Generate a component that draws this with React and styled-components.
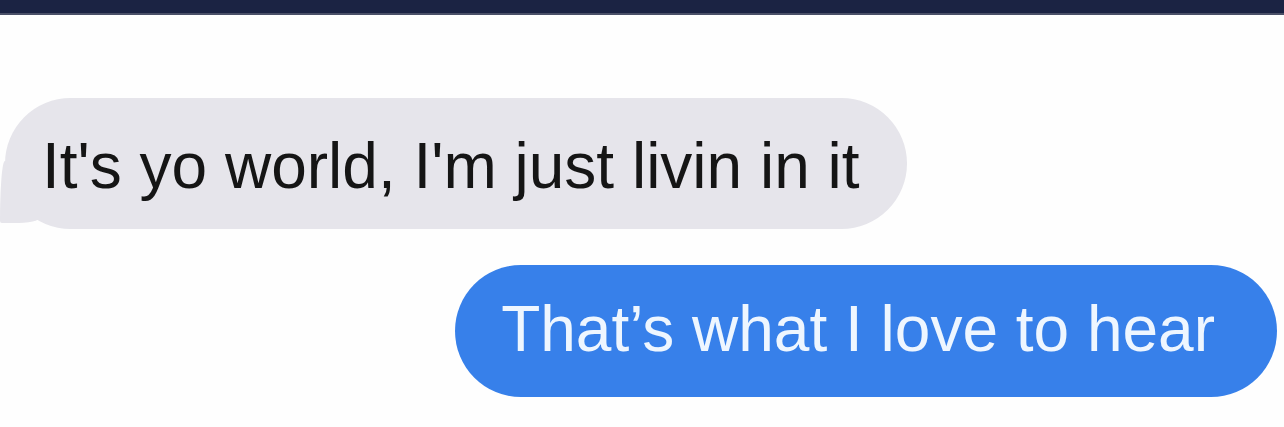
import React from "react";
import styled, { createGlobalStyle } from "styled-components";

const GlobalStyle = createGlobalStyle`
  html, body {
    margin: 0;
    padding: 0;
    background: #ffffff;
  }
  body {
    font-family: "Liberation Sans", Arial, "Noto Sans", sans-serif;
    -webkit-font-smoothing: antialiased;
  }
`;

const Screen = styled.div`
  width: 1284px;
  height: 427px;
  overflow: hidden;
  background: #fefefe;
  display: flex;
  flex-direction: column;
`;

const TopBar = styled.div`
  height: 13px;
  background: #1b2343;
  border-bottom: 2px solid #4a5068;
  flex-shrink: 0;
`;

const Thread = styled.div`
  display: flex;
  flex-direction: column;
  padding: 83px 7px 0 5px;
`;

const Bubble = styled.div`
  position: relative;
  box-sizing: border-box;
  display: flex;
  align-items: center;
  height: ${(p) => (p.$outgoing ? "132px" : "131px")};
  border-radius: 66px;
  font-size: 64px;
  line-height: 1;
  white-space: nowrap;
  align-self: ${(p) => (p.$outgoing ? "flex-end" : "flex-start")};
  margin-top: ${(p) => (p.$outgoing ? "36px" : "0")};
  padding: ${(p) => (p.$outgoing ? "0 62px 5px 46px" : "4px 47px 0 37px")};
  background: ${(p) => (p.$outgoing ? "#3780ea" : "#e6e5eb")};
  color: ${(p) => (p.$outgoing ? "#eef6ff" : "#151515")};
`;

/* tail flaring out of the lower-left corner of an incoming bubble */
const Tail = styled.span`
  position: absolute;
  left: -5px;
  bottom: 6px;
  width: 44px;
  height: 62px;
  background: #e6e5eb;
  border-top-left-radius: 5px 62px;
  border-bottom-left-radius: 2px;
  border-bottom-right-radius: 26px 10px;
  z-index: 0;
`;

const Text = styled.span`
  position: relative;
  z-index: 1;
`;

export default function App() {
  return (
    <>
      <GlobalStyle />
      <Screen>
        <TopBar />
        <Thread>
          <Bubble>
            <Tail />
            <Text>It's yo world, I'm just livin in it</Text>
          </Bubble>
          <Bubble $outgoing>
            <Text>That’s what I love to hear</Text>
          </Bubble>
        </Thread>
      </Screen>
    </>
  );
}
